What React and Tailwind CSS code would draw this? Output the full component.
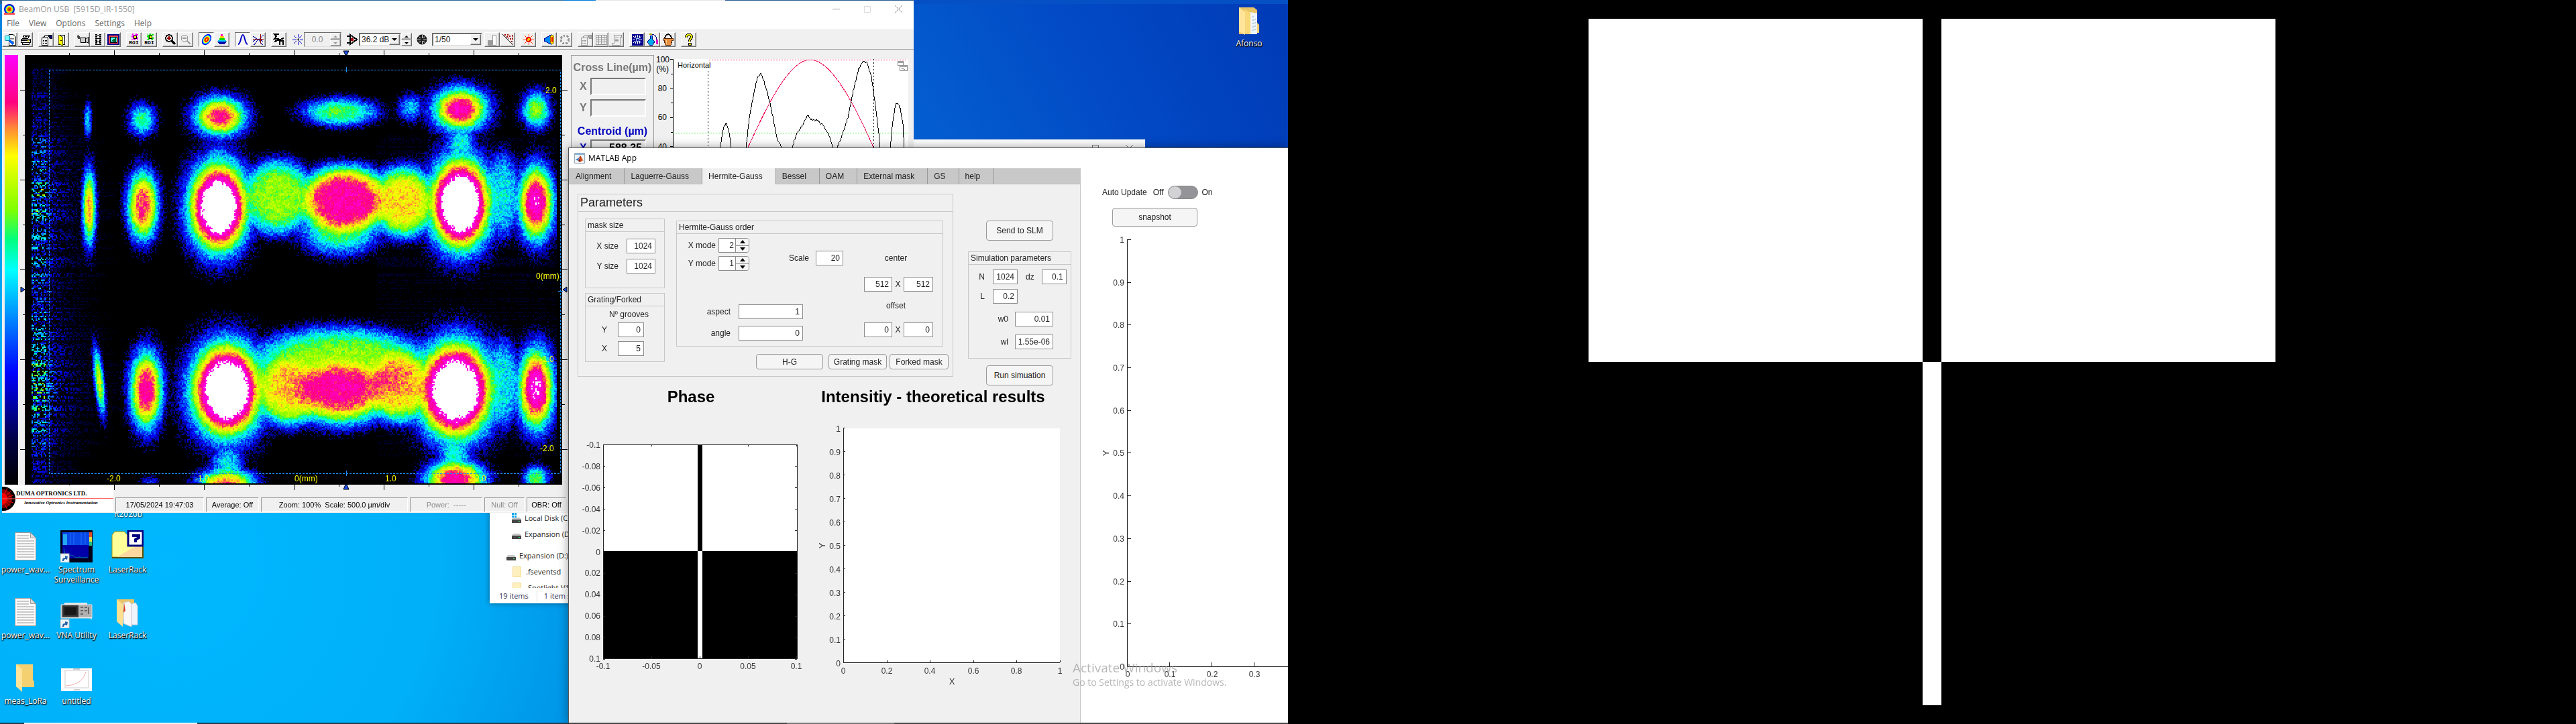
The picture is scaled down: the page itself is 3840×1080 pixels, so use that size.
import { useEffect, useRef } from "react";

/* ---------- beam image ---------- */

const PALETTE = [
  [0, 0, 0, 0],
  [0.1, 0, 0, 60],
  [0.26, 0, 0, 255],
  [0.38, 0, 128, 255],
  [0.5, 0, 255, 255],
  [0.57, 0, 255, 128],
  [0.64, 128, 255, 0],
  [0.765, 255, 255, 0],
  [0.83, 255, 136, 56],
  [0.89, 255, 0, 128],
  [1, 255, 0, 220],
];

/* centre x, centre y, half width, half height, amplitude, tilt, edge steepness */
const SPOTS = [
  [130, 178, 8, 36, 0.46, 0, 1.25],
  [211, 178, 28, 34, 0.56, 0, 1.25],
  [327, 173, 54, 42, 0.92, 0, 1.2],
  [505, 166, 74, 28, 0.6, 0, 1.5],
  [610, 160, 26, 28, 0.44, 0, 1.25],
  [684, 162, 58, 46, 0.97, 0, 1.2],
  [797, 163, 30, 39, 0.66, 0, 1.25],
  [685, 212, 32, 34, 0.5, 0, 1.25],
  [132, 308, 14, 80, 0.84, 0, 1.2],
  [212, 306, 32, 72, 0.88, 0, 1.4],
  [325, 308, 62, 94, 1.24, 0, 1.3],
  [325, 232, 24, 28, 0.4, 0, 1.25],
  [512, 298, 86, 64, 0.94, 0, 2.2],
  [505, 340, 80, 52, 0.6, 0, 1.5],
  [412, 293, 66, 68, 0.66, 0, 2.5],
  [600, 300, 62, 66, 0.78, 0, 2.2],
  [684, 303, 64, 96, 1.3, 0, 1.25],
  [797, 302, 38, 80, 1.0, 0, 1.25],
  [747, 290, 34, 80, 0.48, 0, 2],
  [147, 567, 10, 70, 0.72, 0.1, 1.25],
  [217, 580, 34, 82, 0.94, 0, 1.3],
  [337, 580, 74, 98, 1.3, 0, 1.25],
  [505, 580, 100, 66, 0.9, 0, 1.8],
  [505, 548, 170, 74, 0.66, 0, 2.6],
  [430, 580, 66, 66, 0.77, 0, 2.2],
  [592, 572, 66, 70, 0.8, 0, 2.2],
  [677, 580, 78, 102, 1.3, 0, 1.25],
  [797, 578, 38, 86, 1.03, 0, 1.25],
  [747, 570, 34, 84, 0.48, 0, 2],
  [338, 690, 34, 40, 0.48, 0, 1.25],
  [337, 722, 58, 34, 0.86, 0, 1.4],
  [675, 676, 34, 36, 0.52, 0, 1.25],
  [677, 714, 60, 40, 0.94, 0, 1.4],
  [797, 712, 26, 26, 0.62, 0, 1.25],
  [222, 722, 20, 18, 0.32, 0, 1.25],
];

function makeRandom(seed) {
  let s = seed;
  return () => {
    s = (s + 0x6d2b79f5) | 0;
    let t = Math.imul(s ^ (s >>> 15), 1 | s);
    t = (t + Math.imul(t ^ (t >>> 7), 61 | t)) ^ t;
    return ((t ^ (t >>> 14)) >>> 0) / 4294967296;
  };
}

function colourOf(v) {
  if (v >= 1.04) return [255, 255, 255];
  if (v <= 0) return [0, 0, 0];
  for (let i = 1; i < PALETTE.length; i++) {
    if (v <= PALETTE[i][0]) {
      const a = PALETTE[i - 1];
      const b = PALETTE[i];
      const t = (v - a[0]) / (b[0] - a[0]);
      return [1, 2, 3].map((k) => a[k] + (b[k] - a[k]) * t);
    }
  }
  return [255, 0, 230];
}

function BeamCanvas() {
  const ref = useRef(null);
  useEffect(() => {
    const canvas = ref.current;
    const ctx = canvas.getContext("2d");
    const { width, height } = canvas;
    const img = ctx.createImageData(width, height);
    const rand = makeRandom(41);
    const coarse = Array.from({ length: 170 * 170 }, () => rand() - 0.5);
    for (let j = 0; j < height; j++) {
      const y = 82 + j * 2;
      const rowNoise = rand();
      for (let i = 0; i < width; i++) {
        const x = 37 + i * 2;
        let sum = 0;
        for (const [cx, cy, w, h, amp, tilt, steep] of SPOTS) {
          const dx = (x - cx - tilt * (y - cy)) / w;
          const dy = (y - cy) / h;
          const r2 = dx * dx + dy * dy;
          if (r2 < 4) sum += Math.pow(amp * Math.exp(-1.9 * Math.pow(r2, steep)), 5);
        }
        let v = Math.pow(sum, 0.2);
        const band =
          Math.exp(-Math.pow((y - 310) / 110, 2)) + Math.exp(-Math.pow((y - 570) / 100, 2)) + 0.3;
        const edge = x < 68 ? 1.7 : 1.2 * Math.exp(-(x - 68) / 36);
        const right = x > 560 ? 0.3 : 0.1;
        const floor = band * (edge * 0.16 + right * 0.16) * (0.4 + rowNoise);
        const n = rand();
        const c = coarse[Math.floor(j / 2.5) * 170 + Math.floor(i / 2.5)];
        v = v + (n - 0.5) * (v < 0.5 ? 0.17 : 0.08) + c * 0.07 * (v > 0.1 ? 1 : 0);
        if (v < 0.12) v = n > 0.5 ? floor * (n + 0.6) : 0;
        if (v < 0.05) v = 0;
        if (x < 47 || x > 827 || y < 102 || y > 719) v = 0;
        const [r, g, b] = colourOf(v);
        const k = (j * width + i) * 4;
        img.data[k] = r;
        img.data[k + 1] = g;
        img.data[k + 2] = b;
        img.data[k + 3] = 255;
      }
    }
    ctx.putImageData(img, 0, 0);
  }, []);
  return (
    <canvas
      ref={ref}
      width={400}
      height={320}
      className="col-start-1 row-start-1 mt-2 ml-[10px] h-[641px] w-[801px] bg-black [image-rendering:pixelated]"
    />
  );
}

const MAJOR_X = [170, 304, 438, 572, 706];
const MINOR_X = [103, 237, 371, 505, 639, 773];
const MAJOR_Y = [134, 268, 402, 536, 670];
const MINOR_Y = [201, 335, 469, 603];

function BeamView() {
  return (
    <div className="grid h-[650px] w-[821px] shrink-0">
      <BeamCanvas />
      <svg
        viewBox="27 74 821 658"
        className="col-start-1 row-start-1 h-[658px] w-[821px] overflow-visible"
        fontFamily="'Liberation Sans', sans-serif"
        fontSize="12"
        fill="#ffff00"
      >
        <g stroke="#000" shapeRendering="crispEdges">
          {MAJOR_X.map((x) => (
            <path key={x} d={`M${x} 75v7M${x} 723v8`} />
          ))}
          {MINOR_X.map((x) => (
            <path key={x} d={`M${x} 79v3M${x} 723v3`} />
          ))}
          {MAJOR_Y.map((y) => (
            <path key={y} d={`M30 ${y}h7M838 ${y}h8`} />
          ))}
          {MINOR_Y.map((y) => (
            <path key={y} d={`M34 ${y}h3M838 ${y}h4`} />
          ))}
        </g>
        <g fill="#2050e8" stroke="#000">
          <path d="M512 76h8l-3 6h-2zM512 730h8l-3-7h-2zM31 428v8l6-4zM845 428v8l-6-4z" />
        </g>
        <rect x="73" y="104" width="762" height="602" fill="none" stroke="#1e90ff" strokeDasharray="3 2" shapeRendering="crispEdges" />
        <path d="M516 100v8M516 702v8M70 434h7M832 434h7" stroke="#1e90ff" shapeRendering="crispEdges" />
        <g>
          <text x="813" y="139">2.0</text>
          <text x="799" y="416">0(mm)</text>
          <text x="805" y="540">-1.0</text>
          <text x="805" y="673">-2.0</text>
          <text x="159" y="718">-2.0</text>
          <text x="291" y="718">-1.0</text>
          <text x="439" y="718">0(mm)</text>
          <text x="574" y="718">1.0</text>
          <text x="708" y="718">2.0</text>
        </g>
      </svg>
    </div>
  );
}

/* ---------- toolbar ---------- */

const Glyph = ({ children, w = 18 }) => (
  <svg viewBox={`0 0 ${w} 18`} width={w} height="18" fill="none" stroke="#000" shapeRendering="crispEdges" aria-hidden="true">
    {children}
  </svg>
);

const Properties = ({ c = "#000", p = "#000080" }) => (
  <Glyph>
    <path d="M2 6h9v11H2zM4 10h2M7 10h3M4 12h2M7 12h3M4 14h2M7 14h3" stroke={c} />
    <path d="M5 6l3-4h4l1 2-3 3" stroke={c} />
    <path d="M12 2h5v5h-3z" fill={p} stroke={c} />
  </Glyph>
);

const ICONS = {
  preview: (
    <Glyph>
      <path d="M7 1h6l4 4v12H7z" fill="#fff" />
      <path d="M9 7h6M9 9h6M9 11h6M9 13h6" stroke="#777" />
      <circle cx="5" cy="7" r="4" fill="#7ff" stroke="#08a" />
      <path d="M8 10l6 6" stroke="#06f" strokeWidth="3" />
    </Glyph>
  ),
  print: (
    <Glyph>
      <path d="M5 7l2-5h8l-2 5z" fill="#fff" />
      <path d="M2 8h14v5H2zM4 13h10v3H4z" fill="#fff" />
      <path d="M8 4h4M7 6h4M3 10h12" />
      <path d="M12 11h2" stroke="#cc0" strokeWidth="2" />
    </Glyph>
  ),
  properties: <Properties />,
  exit: (
    <Glyph>
      <path d="M4 2h9v14H4z" fill="#fff" />
      <path d="M4 2l6 3v13l-6-3z" fill="#ff0" stroke="#660" />
      <path d="M7 10h2" />
    </Glyph>
  ),
  camera: (
    <Glyph>
      <path d="M5 6h8v7H6zM13 8l4-2v8l-4-2z" fill="#ccc" />
      <path d="M2 3l3 3M1 5h4M2 7h3" strokeWidth="2" stroke="#444" />
    </Glyph>
  ),
  film: (
    <Glyph>
      <path d="M6 1v16M12 1v16" strokeWidth="3" strokeDasharray="2 1" />
      <path d="M6 2h6M6 7h6M6 12h6M6 16h6" />
    </Glyph>
  ),
  picture: (
    <Glyph>
      <path d="M1 2h16v14H1z" fill="#f44" stroke="#008" strokeWidth="2" />
      <path d="M4 5h10v8H4z" fill="#5ff" />
      <path d="M5 12l5-4 3-3v8z" fill="#063" stroke="none" />
    </Glyph>
  ),
  zoomIn: (
    <Glyph>
      <circle cx="7" cy="7" r="5" fill="#fff" strokeWidth="2" />
      <path d="M4 7h6M7 4v6" stroke="#900" strokeWidth="2" />
      <path d="M11 11l5 5" strokeWidth="3" />
    </Glyph>
  ),
  zoomOut: (
    <Glyph>
      <circle cx="7" cy="7" r="5" stroke="#999" />
      <path d="M4 7h6M11 11l5 5" stroke="#999" strokeWidth="2" />
    </Glyph>
  ),
  beam2d: (
    <Glyph>
      <g transform="rotate(35 9 9)" stroke="none" shapeRendering="auto">
        <ellipse cx="9" cy="9" rx="6" ry="9" fill="#00f" />
        <ellipse cx="9" cy="9" rx="5" ry="7" fill="#0ff" />
        <ellipse cx="9" cy="9" rx="4" ry="6" fill="#ff0" />
        <ellipse cx="9" cy="9" rx="3" ry="4" fill="#f00" />
        <ellipse cx="9" cy="9" rx="1" ry="2" fill="#ff0" />
      </g>
    </Glyph>
  ),
  beam3d: (
    <Glyph>
      <g stroke="none">
        <path d="M7 1h3v3H7z" fill="#f0a" />
        <path d="M6 4h6v3H6z" fill="#fc0" />
        <path d="M5 7h8v3H5z" fill="#0d0" />
        <path d="M3 10h12v3H3z" fill="#0cf" />
        <path d="M1 12h16l-5 4H6z" fill="#00a" />
      </g>
    </Glyph>
  ),
  gauss: (
    <Glyph>
      <path d="M2 16c4 0 4-14 7-14s3 14 7 14" stroke="#0000c0" strokeWidth="2" shapeRendering="auto" />
    </Glyph>
  ),
  cross: (
    <Glyph>
      <path d="M1 4l6 4-6 4M2 17c4-2 6-8 7-9 2 2 3 7 7 9M17 2l-6 6 5 4" stroke="#0000a0" />
      <path d="M1 8h16M12 1v14" stroke="#900" />
    </Glyph>
  ),
  sum: (
    <Glyph>
      <path d="M8 2V1H2l3 3-3 4h6V7M2 12l14-5M10 17v-6h5v6" strokeWidth="2" />
    </Glyph>
  ),
  bars: (
    <Glyph>
      <path d="M2 10h6v7H2z" fill="#999" stroke="#999" />
      <path d="M9 2h5v15H9z" fill="#fff" stroke="#999" />
    </Glyph>
  ),
  scatter: (
    <Glyph>
      <path d="M1 1l16 16" />
      <path d="M4 2h2M8 2h2M7 5h2M11 4h2M12 8h2M9 7h1M15 3h2M15 8h2M14 12h2M15 5h1" stroke="#a00" strokeWidth="2" />
    </Glyph>
  ),
  laser: (
    <Glyph>
      <path d="M9 1v4M9 13v4M1 9h4M13 9h4M3 3l3 3M12 12l3 3M15 3l-3 3M6 12l-3 3" stroke="#f30" />
      <circle cx="9" cy="9" r="3" fill="#fb0" stroke="#e00" strokeWidth="2" />
    </Glyph>
  ),
  horn: (
    <Glyph>
      <path d="M1 8l10-6v14L1 11z" fill="#08f" stroke="#008" />
      <ellipse cx="13" cy="9" rx="3" ry="7" fill="#ff0" stroke="#960" />
      <path d="M13 5v8" stroke="#f00" strokeWidth="2" />
    </Glyph>
  ),
  ring: (
    <Glyph>
      <circle cx="9" cy="9" r="6" stroke="#999" strokeWidth="3" strokeDasharray="3 2" />
    </Glyph>
  ),
  propertiesOff: <Properties c="#999" p="#aaa" />,
  grid: (
    <Glyph>
      <path d="M1 2h16v14H1zM1 5h16M1 9h16M1 12h16M5 2v14M9 2v14M13 2v14" stroke="#999" />
    </Glyph>
  ),
  script: (
    <Glyph>
      <path d="M5 2h11v3h-2v12H2v-3h3zM7 6h5M7 8h5M7 10h5M7 12h5" stroke="#999" />
    </Glyph>
  ),
  pattern: (
    <Glyph>
      <path d="M1 1h16v16H1z" fill="#000090" stroke="#000090" />
      <path d="M3 4l3 3M6 3v3M15 4l-3 3M12 3v3M3 14l3-3M6 15v-3M15 14l-3-3M12 15v-3M2 9h4M12 9h4M9 2v4M9 12v4" stroke="#fff" />
      <path d="M7 7h4v4H7z" stroke="#9cf" />
    </Glyph>
  ),
  flask: (
    <Glyph>
      <path d="M4 1h4" stroke="#aa0" strokeWidth="2" />
      <path d="M5 3v5l-4 4 3 5h5l3-5-4-4V3z" fill="#0ae" stroke="#008" />
      <path d="M8 2c5-1 6 2 7 7" stroke="#008" />
      <path d="M15 9v7" stroke="#d0c" strokeWidth="3" />
    </Glyph>
  ),
  bucket: (
    <Glyph>
      <path d="M4 8c0-9 10-9 10 0" strokeWidth="2" />
      <path d="M2 7h14v3h-1l-2 7H5L3 10H2z" fill="#e89040" stroke="#520" />
      <path d="M6 10l1 6" stroke="#ffd090" />
    </Glyph>
  ),
  help: (
    <Glyph>
      <path d="M5 6V4l2-2h4l2 2v2l-3 4v2" strokeWidth="4" />
      <path d="M5 6V4l2-2h4l2 2v2l-3 4v2" strokeWidth="2" stroke="#ee0" />
      <path d="M8 14h4v3H8z" fill="#ee0" />
    </Glyph>
  ),
};

function Roi({ colour }) {
  return (
    <span className="flex flex-col items-end">
      <svg viewBox="0 0 10 10" className="mr-px size-[10px]" shapeRendering="crispEdges" aria-hidden="true">
        <rect x="1" y="1" width="8" height="8" fill="none" stroke={colour} strokeWidth="2" strokeDasharray="1 1" />
        <rect x="2" y="2" width="6" height="6" fill={colour} />
        <rect x="3" y="3" width="4" height="4" fill="#ff0" stroke="#000" />
      </svg>
      <span className="font-mono text-[8px] leading-[8px] font-bold">ROI</span>
    </span>
  );
}

const RAISED = "border border-t-white border-l-white border-r-[#6d6d6d] border-b-[#6d6d6d] shadow-[inset_-1px_-1px_0_#b0b0b0]";

function Tool({ name, children, pressed }) {
  return (
    <button
      type="button"
      aria-label={name}
      className={
        pressed
          ? "flex h-[22px] w-[23px] items-center justify-center overflow-hidden border border-t-[#6d6d6d] border-r-white border-b-white border-l-[#6d6d6d] bg-[#f8f8f8]"
          : `flex h-[22px] w-[23px] items-center justify-center overflow-hidden bg-[#f0f0f0] ${RAISED}`
      }
    >
      {children || ICONS[name]}
    </button>
  );
}

function ToolGroup({ names, pressed }) {
  return (
    <div className="flex">
      {names.map((n) => (
        <Tool key={n} name={n} pressed={n === pressed} />
      ))}
    </div>
  );
}

function StepButtons({ label, muted }) {
  return (
    <span className={muted ? "flex flex-col text-[#999]" : "flex flex-col text-black"}>
      <button type="button" aria-label={`${label} up`} className={`flex h-[10px] w-4 items-center justify-center bg-[#f0f0f0] ${RAISED}`}>
        <svg width="6" height="3" viewBox="0 0 6 3" fill="currentColor"><path d="M0 3h6L3 0z" /></svg>
      </button>
      <button type="button" aria-label={`${label} down`} className={`flex h-[10px] w-4 items-center justify-center bg-[#f0f0f0] ${RAISED}`}>
        <svg width="6" height="3" viewBox="0 0 6 3" fill="currentColor"><path d="M0 0h6L3 3z" /></svg>
      </button>
    </span>
  );
}

function Combo({ label, value, className }) {
  return (
    <span className={`flex h-5 border-2 border-t-[#6d6d6d] border-r-[#e3e3e3] border-b-[#e3e3e3] border-l-[#6d6d6d] bg-white ${className}`}>
      <select aria-label={label} defaultValue={value} className="min-w-0 flex-1 appearance-none bg-white pl-0.5 text-xs leading-4 text-[#222]">
        <option>{value}</option>
      </select>
      <span className={`flex w-4 shrink-0 items-center justify-center bg-[#f0f0f0] ${RAISED}`}>
        <svg width="8" height="4" viewBox="0 0 8 4"><path d="M0 0h8L4 4z" /></svg>
      </span>
    </span>
  );
}

function Toolbar() {
  return (
    <div className="flex h-[30px] shrink-0 items-center gap-2 border-t border-b border-t-[#e8e8e8] border-b-[#a0a0a0] bg-[#f0f0f0]">
      <ToolGroup names={["preview", "print"]} />
      <ToolGroup names={["properties", "exit"]} />
      <ToolGroup names={["camera", "film", "picture"]} />
      <div className="flex">
        <Tool name="set region"><Roi colour="#f0f" /></Tool>
        <Tool name="show region"><Roi colour="#0d0" /></Tool>
      </div>
      <ToolGroup names={["zoomIn", "zoomOut"]} />
      <ToolGroup names={["beam2d", "beam3d"]} pressed="beam2d" />
      <ToolGroup names={["gauss", "cross"]} pressed="gauss" />
      <ToolGroup names={["sum"]} />
      <div className="flex items-center">
        <Glyph>
          <path d="M9 1v5M9 12v5M1 9h5M12 9h5M3 3l4 4M11 11l4 4M15 3l-4 4M7 11l-4 4" stroke="#00c" />
          <path d="M9 7v4M7 9h4" />
        </Glyph>
        <span className="flex h-[22px] w-14 border border-t-[#6d6d6d] border-r-[#ddd] border-b-[#ddd] border-l-[#6d6d6d]">
          <input aria-label="Average level" defaultValue="0.0" className="w-[38px] bg-[#f0f0f0] text-center text-xs leading-4 text-[#888]" />
          <StepButtons label="Average level" muted />
        </span>
        <span className="ml-[7px]">
          <Glyph>
            <path d="M1 4h5M1 14h5M6 2v14l10-7z" fill="#ddd" strokeWidth="2" />
            <circle cx="9" cy="9" r="2" fill="#a00" stroke="#a00" />
          </Glyph>
        </span>
        <Combo label="Gain" value="36.2 dB" className="ml-px w-[63px]" />
        <StepButtons label="Gain" />
        <span className="mx-1.5">
          <Glyph>
            <circle cx="9" cy="9" r="7" fill="#222" shapeRendering="auto" />
            <path d="M9 2v5M9 11v5M2 9h5M11 9h5M4 4l3 3M11 11l3 3M14 4l-3 3M7 11l-3 3" stroke="#ddd" />
          </Glyph>
        </span>
        <Combo label="Shutter" value="1/50" className="mr-[-5px] w-[75px]" />
      </div>
      <ToolGroup names={["bars", "scatter"]} />
      <ToolGroup names={["laser"]} />
      <ToolGroup names={["horn", "ring"]} />
      <ToolGroup names={["propertiesOff", "grid", "script"]} />
      <ToolGroup names={["pattern", "flask", "bucket"]} />
      <ToolGroup names={["help"]} />
    </div>
  );
}

/* ---------- BeamOn window ---------- */

function Reading({ label, value, className }) {
  return (
    <label className={`flex items-center gap-1 pl-3 text-base leading-6 font-bold ${className}`}>
      <span className="w-3 shrink-0">{label}</span>
      <input
        aria-label={label}
        defaultValue={value}
        className="h-[26px] w-[83px] border-2 border-t-[#777] border-r-white border-b-white border-l-[#777] bg-[#f0f0f0] pr-1 text-right text-base leading-5 text-black"
      />
    </label>
  );
}

function wobble(points) {
  const rand = makeRandom(9);
  let d = `M${points[0][0]} ${points[0][1]}`;
  for (let i = 1; i < points.length; i++) {
    const [x0, y0] = points[i - 1];
    const [x1, y1] = points[i];
    for (let x = x0 + 1; x <= x1; x++) {
      const t = (x - x0) / (x1 - x0);
      d += `L${x} ${Math.round(y0 + (y1 - y0) * t + (rand() - 0.5) * 3)}`;
    }
  }
  return d;
}

const TRACES = [
  [[1073, 222], [1076, 205], [1079, 188], [1083, 184], [1087, 197], [1090, 222]],
  [[1112, 222], [1117, 175], [1124, 138], [1129, 116], [1134, 109], [1137, 116], [1144, 138], [1153, 178], [1158, 206], [1166, 221]],
  [[1181, 221], [1187, 200], [1196, 187], [1204, 171], [1208, 178], [1219, 180], [1228, 188], [1236, 202], [1242, 221]],
  [[1248, 221], [1256, 200], [1264, 175], [1272, 135], [1280, 103], [1287, 91], [1292, 93], [1299, 114], [1304, 150], [1309, 190], [1312, 222]],
  [[1327, 222], [1331, 180], [1335, 156], [1338, 153], [1342, 162], [1346, 185], [1348, 222]],
];

function ProfileChart() {
  return (
    <svg viewBox="975 74 387 148" className="h-[148px] w-[387px]" fontFamily="'Liberation Sans', sans-serif" fontSize="12">
      <rect x="1003" y="88" width="351" height="140" fill="#fff" />
      <g textAnchor="end">
        <text x="998" y="93">100</text>
        <text x="997" y="107">(%)</text>
        <text x="994" y="136">80</text>
        <text x="994" y="179">60</text>
        <text x="994" y="223">40</text>
      </g>
      <path d="M1003 88v140M999 88h4M999 131h4M999 175h4M999 218h4M1000 110h3M1000 153h3M1000 197h3" stroke="#000" fill="none" shapeRendering="crispEdges" />
      <path d="M1057 89h296" stroke="#f03060" strokeDasharray="2 2" shapeRendering="crispEdges" />
      <path d="M1003 198h350" stroke="#40f040" strokeDasharray="2 2" shapeRendering="crispEdges" />
      <path d="M1055 106v120M1302 88v138" stroke="#000" strokeDasharray="2 3" shapeRendering="crispEdges" />
      <text x="1010" y="101" fontSize="11">Horizontal</text>
      <path d="M1114 222C1140 165 1175 89 1208 89S1278 165 1303 222" stroke="#f02060" fill="none" shapeRendering="crispEdges" />
      {TRACES.map((t) => (
        <path key={t[0][0]} d={wobble(t)} stroke="#000" fill="none" shapeRendering="crispEdges" />
      ))}
      <path d="M1338 91h8v6h-8zM1341 97h11v8h-11zM1341 99h11M1338 93h8M1343 101l6 3" stroke="#888" fill="#fff" shapeRendering="crispEdges" />
    </svg>
  );
}

function WindowButtons() {
  return (
    <div className="ml-auto flex items-center gap-9 pr-[17px] text-[#999]">
      <button type="button" aria-label="Minimize"><svg width="11" height="11" viewBox="0 0 11 11" stroke="currentColor"><path d="M0 5.500h11" /></svg></button>
      <button type="button" aria-label="Maximize" className="text-[#ddd]"><svg width="10" height="10" viewBox="0 0 10 10" stroke="currentColor" fill="none"><path d="M.5.5h9v9h-9z" /></svg></button>
      <button type="button" aria-label="Close"><svg width="11" height="11" viewBox="0 0 11 11" stroke="currentColor"><path d="M0 0l11 11M11 0L0 11" /></svg></button>
    </div>
  );
}

const STATUS = [
  ["17/05/2024 19:47:03", "w-[132px]"],
  ["Average: Off", "w-[79px]"],
  ["Zoom: 100%  Scale: 500.0 µm/div", "w-[219px]"],
  ["Power:  -----", "w-[108px] text-[#8a8a8a]"],
  ["Null: Off", "w-[60px] text-[#8a8a8a]"],
  ["OBR: Off", "w-[59px]"],
];

function BeamOnWindow() {
  return (
    <section className="absolute top-px left-[3px] flex h-[764px] w-[1359px] flex-col overflow-hidden bg-[#f0f0f0] font-['Liberation_Sans',sans-serif] text-xs">
      <header className="flex h-[25px] shrink-0 items-center gap-1.5 bg-white pl-[3px] font-['Open_Sans',sans-serif] text-[#999]">
        <svg width="16" height="16" viewBox="0 0 16 16" aria-hidden="true">
          <ellipse cx="8" cy="8" rx="8" ry="8" fill="#00c" />
          <ellipse cx="8" cy="8" rx="6" ry="6" fill="#0dd" />
          <ellipse cx="8" cy="8" rx="5" ry="5" fill="#ee0" />
          <ellipse cx="8" cy="8" rx="3" ry="3" fill="#f30" />
          <ellipse cx="8" cy="8" rx="1" ry="1" fill="#0a0" />
          <path d="M0 13h16v3H0z" fill="#f55" />
        </svg>
        <h1 className="whitespace-pre">BeamOn USB  [5915D_IR-1550]</h1>
        <WindowButtons />
      </header>
      <nav className="flex h-[18px] shrink-0 items-center gap-3.5 bg-white pl-[7px] font-['Open_Sans',sans-serif] text-[#666]">
        {["File", "View", "Options", "Settings", "Help"].map((m) => (
          <button key={m} type="button">{m}</button>
        ))}
      </nav>
      <Toolbar />
      <div className="flex h-[650px] shrink-0">
        <div className="mt-2 ml-1 h-[641px] w-5 shrink-0 bg-[linear-gradient(to_bottom,#ff00ff_0%,#ff0080_11%,#ff8838_17%,#ffff00_23.5%,#80ff00_36%,#00ff80_43%,#00ffff_50%,#0080ff_62%,#0000ff_74%,#000040_90%,#000000_100%)]" />
        <BeamView />
        <aside className="mt-2 ml-[3px] w-[124px] shrink-0 border border-b-0 border-[#999]">
          <h2 className="mt-2 text-center text-base leading-5 font-bold text-[#777]">Cross Line(µm)</h2>
          <Reading label="X" value="" className="mt-[5px] text-[#777]" />
          <Reading label="Y" value="" className="mt-1.5 text-[#777]" />
          <h2 className="mt-3 text-center text-base leading-5 font-bold text-[#0000c0]">Centroid (µm)</h2>
          <Reading label="X" value="588.35" className="mt-0.5 text-[#0000c0]" />
        </aside>
        <ProfileChart />
      </div>
      <footer className="flex h-10 shrink-0 items-end">
        <div className="flex h-10 w-[166px] shrink-0 overflow-hidden bg-white font-['Liberation_Serif',serif]">
          <svg width="21" height="40" viewBox="0 0 21 40" className="shrink-0" aria-hidden="true">
            <ellipse cx="2" cy="20" rx="18" ry="18" fill="#000" />
            <ellipse cx="1" cy="20" rx="14" ry="14" fill="#800" />
            <ellipse cx="0" cy="20" rx="8" ry="9" fill="#f00" />
            <path d="M0 20L14 8M0 20l17-5M0 20l17 6M0 20l13 11M0 20L8 4M0 20l8 16" stroke="#f00" />
            <path d="M0 20h21" stroke="#f66" />
          </svg>
          <div className="flex-1 whitespace-nowrap">
            <p className="h-5 border-b border-[#f66] pt-1.5 text-[9px] leading-3 font-bold">DUMA OPTRONICS LTD.</p>
            <p className="pl-3 text-[7px] leading-3 font-bold italic">Innovative Optronics Instrumentation</p>
          </div>
        </div>
        <div className="ml-[3px] flex gap-[3px] text-[11px]">
          {STATUS.map(([t, c]) => (
            <span key={t} className={`h-[22px] border border-t-[#999] border-r-white border-b-white border-l-[#999] text-center leading-5 whitespace-pre ${c}`}>
              {t}
            </span>
          ))}
          <span className="h-[22px] w-40 border border-t-[#999] border-l-[#999]" />
        </div>
      </footer>
    </section>
  );
}

/* ---------- MATLAB window ---------- */

const FIELD = "h-[22px] border border-[#8c8c8c] bg-white pr-1 text-right text-xs text-[#222]";

function Field({ label, value, width, labelClass = "", className = "" }) {
  return (
    <label className={`flex items-center ${className}`}>
      <span className={labelClass}>{label}</span>
      <input defaultValue={value} className={`${FIELD} ${width}`} />
    </label>
  );
}

function Spinner({ label, value }) {
  return (
    <label className="flex items-center gap-1">
      <span className="w-[42px] text-right whitespace-nowrap">{label}</span>
      <span className="flex h-[22px] w-[46px] overflow-hidden rounded-r border border-[#8c8c8c]">
        <input defaultValue={value} className="w-6 bg-white pr-0.5 text-right" />
        <span className="flex flex-1 flex-col divide-y divide-[#8c8c8c] border-l border-[#8c8c8c] bg-[#f5f5f5]">
          <button type="button" aria-label={`${label} up`} className="flex flex-1 items-center justify-center">
            <svg width="8" height="5" viewBox="0 0 8 5"><path d="M0 5h8L4 0z" /></svg>
          </button>
          <button type="button" aria-label={`${label} down`} className="flex flex-1 items-center justify-center">
            <svg width="8" height="5" viewBox="0 0 8 5"><path d="M0 0h8L4 5z" /></svg>
          </button>
        </span>
      </span>
    </label>
  );
}

function Panel({ title, className = "", children }) {
  return (
    <section className={`border border-[#c8c8c8] ${className}`}>
      <h3 className="h-[19px] border-b border-[#c8c8c8] pl-[3px] leading-[18px] whitespace-nowrap">{title}</h3>
      {children}
    </section>
  );
}

const Push = ({ className, children }) => (
  <button type="button" className={`rounded border border-[#999] bg-[#f5f5f5] whitespace-nowrap ${className}`}>
    {children}
  </button>
);

const Pair = ({ name, value, className }) => (
  <div className={`flex items-center justify-between ${className}`}>
    <input aria-label={`${name} x`} defaultValue={value} className={`${FIELD} w-[42px]`} />
    <span>X</span>
    <input aria-label={`${name} y`} defaultValue={value} className={`${FIELD} w-11`} />
  </div>
);

function Parameters() {
  return (
    <section className="mt-[14px] ml-[13px] w-[560px] shrink-0 self-start border border-[#c8c8c8] pb-[10px]">
      <h2 className="h-[26px] border-b border-[#c8c8c8] pl-[3px] text-lg leading-6">Parameters</h2>
      <div className="flex justify-between pr-[6px] pl-[10px]">
        <div className="mt-[10px] flex w-[119px] flex-col gap-[7px]">
          <Panel title="mask size" className="h-[104px]">
            <div className="mt-[10px] flex flex-col gap-2">
              <Field label="X size" value="1024" width="w-[43px]" labelClass="mr-3 w-[49px] text-right" />
              <Field label="Y size" value="1024" width="w-[43px]" labelClass="mr-3 w-[49px] text-right" />
            </div>
          </Panel>
          <Panel title="Grating/Forked" className="h-[103px]">
            <p className="pl-3 text-center leading-6">Nº grooves</p>
            <div className="flex flex-col gap-1.5">
              <Field label="Y" value="0" width="w-[39px]" labelClass="mr-4 w-8 text-right" />
              <Field label="X" value="5" width="w-[39px]" labelClass="mr-4 w-8 text-right" />
            </div>
          </Panel>
        </div>
        <div className="mt-[13px] flex w-[406px] flex-col gap-[11px]">
          <Panel title="Hermite-Gauss order" className="h-[188px] w-[398px]">
            <div className="flex">
              <div className="w-[248px] shrink-0">
                <div className="mt-[6px] flex items-start justify-between pl-4">
                  <div className="flex flex-col gap-[5px]">
                    <Spinner label="X mode" value="2" />
                    <Spinner label="Y mode" value="1" />
                  </div>
                  <Field label="Scale" value="20" width="w-[41px]" labelClass="mr-[10px]" className="mt-[19px]" />
                </div>
                <div className="mt-[50px] flex flex-col gap-[10px]">
                  <Field label="aspect" value="1" width="w-24" labelClass="mr-3 w-20 text-right" />
                  <Field label="angle" value="0" width="w-24" labelClass="mr-3 w-20 text-right" />
                </div>
              </div>
              <div className="ml-[31px] flex w-[103px] flex-col pt-[28px] text-center">
                <span className="pr-5 pl-3 leading-4">center</span>
                <Pair name="center" value="512" className="mt-5" />
                <span className="mt-[13px] pr-5 pl-3 leading-4">offset</span>
                <Pair name="offset" value="0" className="mt-[17px]" />
              </div>
            </div>
          </Panel>
          <div className="flex justify-end">
            <Push className="h-[23px] w-[100px]">H-G</Push>
            <Push className="ml-2 h-[23px] w-[87px]">Grating mask</Push>
            <Push className="ml-1 h-[23px] w-[88px]">Forked mask</Push>
          </div>
        </div>
      </div>
    </section>
  );
}

function Simulation() {
  return (
    <div className="mt-[54px] ml-[22px] flex w-[154px] flex-col items-center gap-[15px]">
      <Push className="mb-px h-[30px] w-[100px]">Send to SLM</Push>
      <Panel title="Simulation parameters" className="h-[160px] w-full">
        <div className="mt-[7px] flex">
          <Field label="N" value="1024" width="w-[37px]" labelClass="mr-3 w-6 text-right" />
          <Field label="dz" value="0.1" width="w-[37px]" labelClass="mr-[11px] ml-3" />
        </div>
        <Field label="L" value="0.2" width="w-[37px]" labelClass="mr-3 w-6 text-right" className="mt-[7px]" />
        <Field label="w0" value="0.01" width="w-[57px]" labelClass="mr-[10px] w-[59px] text-right" className="mt-3" />
        <Field label="wl" value="1.55e-06" width="w-[57px]" labelClass="mr-[10px] w-[59px] text-right" className="mt-3" />
      </Panel>
      <Push className="-mt-[5px] h-[30px] w-[100px]">Run simuation</Push>
    </div>
  );
}

const PHASE_Y = ["-0.1", "-0.08", "-0.06", "-0.04", "-0.02", "0", "0.02", "0.04", "0.06", "0.08", "0.1"];
const PHASE_X = ["-0.1", "-0.05", "0", "0.05", "0.1"];
const UNIT = ["0", "0.1", "0.2", "0.3", "0.4", "0.5", "0.6", "0.7", "0.8", "0.9", "1"];
const UNIT_X = ["0", "0.2", "0.4", "0.6", "0.8", "1"];

function PhasePlot() {
  return (
    <svg viewBox="862 607 348 471" className="h-[471px] w-[348px]" fontSize="12" fill="#333">
      <rect x="900" y="663" width="289" height="159" fill="#fff" />
      <rect x="900" y="822" width="289" height="160" fill="#000" />
      <rect x="1041" y="663" width="7" height="159" fill="#000" />
      <rect x="1041" y="822" width="7" height="160" fill="#fff" />
      <rect x="900" y="663" width="289" height="319" fill="none" stroke="#222" shapeRendering="crispEdges" />
      {PHASE_Y.map((t, i) => (
        <g key={t}>
          <path d={`M900 ${663 + i * 32}h3M1186 ${663 + i * 32}h3`} stroke="#222" shapeRendering="crispEdges" />
          <text x="896" y={668 + Math.round(i * 31.9)} textAnchor="end">{t}</text>
        </g>
      ))}
      {PHASE_X.map((t, i) => (
        <g key={t}>
          <path d={`M${900 + i * 72} 982v-3M${900 + i * 72} 663v3`} stroke="#222" shapeRendering="crispEdges" />
          <text x={900 + i * 72} y="998" textAnchor="middle">{t}</text>
        </g>
      ))}
    </svg>
  );
}

function IntensityPlot() {
  return (
    <svg viewBox="1210 607 390 471" className="h-[471px] w-[390px]" fontSize="12" fill="#333">
      <rect x="1258" y="639" width="323" height="349" fill="#fff" />
      <path d="M1258 639v349h323" stroke="#222" fill="none" shapeRendering="crispEdges" />
      {UNIT.map((t, i) => (
        <g key={t}>
          <path d={`M1258 ${988 - i * 35}h3`} stroke="#222" shapeRendering="crispEdges" />
          <text x="1254" y={994 - i * 35} textAnchor="end">{t}</text>
        </g>
      ))}
      {UNIT_X.map((t, i) => (
        <g key={t}>
          <path d={`M${1258 + Math.round(i * 64.5)} 988v-3`} stroke="#222" shapeRendering="crispEdges" />
          <text x={1258 + Math.round(i * 64.5)} y="1005" textAnchor="middle">{t}</text>
        </g>
      ))}
      <text x="1420" y="1021" textAnchor="middle" fontSize="13">X</text>
      <text transform="translate(1231 814) rotate(-90)" textAnchor="middle" fontSize="13">Y</text>
    </svg>
  );
}

function CameraPlot() {
  return (
    <svg viewBox="1611 345 309 733" className="h-[733px] w-[309px]" fontSize="12" fill="#333">
      <path d="M1680 357v637h240" stroke="#222" fill="none" shapeRendering="crispEdges" />
      {UNIT.map((t, i) => (
        <g key={t}>
          <path d={`M1680 ${994 - Math.round(i * 63.7)}h6`} stroke="#222" shapeRendering="crispEdges" />
          <text x="1676" y={999 - Math.round(i * 63.7)} textAnchor="end">{t}</text>
        </g>
      ))}
      {UNIT.slice(0, 4).map((t, i) => (
        <g key={t}>
          <path d={`M${1680 + i * 63} 994v-6`} stroke="#222" shapeRendering="crispEdges" />
          <text x={1681 + i * 63} y="1010" textAnchor="middle">{t}</text>
        </g>
      ))}
      <text transform="translate(1653 676) rotate(-90)" textAnchor="middle" fontSize="13">Y</text>
    </svg>
  );
}

const TABS = ["Alignment", "Laguerre-Gauss", "Hermite-Gauss", "Bessel", "OAM", "External mask", "GS", "help"];

function MatlabWindow() {
  return (
    <section className="absolute top-[220px] right-0 bottom-0 left-[847px] flex flex-col overflow-hidden border-t border-l border-[#555] bg-white font-['Liberation_Sans',sans-serif] text-xs text-[#222] shadow-[0_0_14px_rgba(0,0,0,0.4)]">
      <header className="flex h-[30px] shrink-0 items-center gap-[5px] pl-2 font-['Open_Sans',sans-serif] text-black">
        <svg width="16" height="16" viewBox="0 0 16 16" aria-hidden="true">
          <path d="M.5.5h15v15H.5z" fill="#eef2f6" stroke="#9ab" />
          <path d="M1 1h14v2H1z" fill="#8ab8dc" />
          <path d="M2 10l4-2 3-4-3 8z" fill="#3a7cc0" />
          <path d="M6 12l3-8c2 2 3 6 5 8-2-1-3 0-5 2z" fill="#d8501c" />
          <path d="M9 4c1 3 0 6-3 8l3 2z" fill="#701c10" />
        </svg>
        MATLAB App
      </header>
      <div className="flex min-h-0 flex-1">
        <div className="w-[763px] shrink-0 border-r border-[#c8c8c8] bg-[#f0f0f0]">
          <div role="tablist" className="flex h-6 border-b border-[#bbb] bg-[#c8c8c8] pl-px">
            {TABS.map((t) => (
              <button
                key={t}
                type="button"
                role="tab"
                aria-selected={t === "Hermite-Gauss"}
                className={
                  t === "Hermite-Gauss"
                    ? "-mb-px border-r border-[#999] bg-[#f0f0f0] pr-[19px] pl-[9px]"
                    : "border-r border-[#999] pr-[19px] pl-[9px]"
                }
              >
                {t}
              </button>
            ))}
          </div>
          <div className="flex h-[302px]">
            <Parameters />
            <Simulation />
          </div>
          <div className="flex pl-[13px]">
            <div>
              <h2 className="pr-[10px] text-center text-2xl leading-[30px] font-bold text-black">Phase</h2>
              <PhasePlot />
            </div>
            <div>
              <h2 className="pr-[26px] text-center text-2xl leading-[30px] font-bold whitespace-nowrap text-black">Intensitiy - theoretical results</h2>
              <IntensityPlot />
            </div>
          </div>
        </div>
        <div className="flex-1 bg-white">
          <label className="mt-[26px] ml-8 flex items-center">
            <span className="mr-[9px]">Auto Update</span>
            <span className="mr-1.5">Off</span>
            <input
              type="checkbox"
              role="switch"
              className="h-5 w-[45px] appearance-none rounded-full border border-[#888] bg-[#939398] before:block before:h-[18px] before:w-[19px] before:rounded-full before:bg-[#d2d2d4] before:content-['']"
            />
            <span className="ml-1.5">On</span>
          </label>
          <Push className="mt-[13px] ml-[47px] block h-7 w-[127px]">snapshot</Push>
          <div className="mt-[7px]">
            <CameraPlot />
          </div>
        </div>
      </div>
    </section>
  );
}

/* ---------- explorer window ---------- */

const Drive = ({ windows }) => (
  <svg width="16" height="16" viewBox="0 0 16 16" aria-hidden="true">
    {windows && <path d="M1 0h3v3H1zM5 0h3v3H5zM1 4h3v3H1zM5 4h3v3H5z" fill="#10a8f0" />}
    <path d="M3 7h10l2 3H1z" fill="#c8c8c8" />
    <path d="M1 10h14v5H1z" fill="#444" />
    <path d="M11 12h2v1h-2z" fill="#3f6" />
  </svg>
);

const SmallFolder = () => (
  <svg width="14" height="16" viewBox="0 0 14 16" aria-hidden="true">
    <path d="M.5.5h12v15H.5z" fill="#fff0c0" stroke="#f0d890" />
    <path d="M11 10h2v5h-2z" fill="#ffe8a0" />
  </svg>
);

function ExplorerWindow() {
  return (
    <section className="absolute top-[700px] left-[730px] flex h-[200px] w-[240px] flex-col bg-white pt-[61px] font-['Open_Sans',sans-serif] text-[11px] whitespace-nowrap text-[#222] shadow-[0_0_8px_rgba(0,0,0,0.4)]">
      <div className="h-[116px] overflow-hidden">
        <p className="flex h-6 items-center gap-1 pl-8"><Drive windows />Local Disk (C:)</p>
        <p className="flex h-6 items-center gap-1 pl-8"><Drive />Expansion (D:)</p>
        <p className="mt-2 flex h-6 items-center gap-1 pl-6"><Drive />Expansion (D:)</p>
        <p className="flex h-6 items-center gap-1.5 pl-[34px]"><SmallFolder />.fseventsd</p>
        <p className="flex h-6 items-center gap-1.5 pl-[34px]"><SmallFolder />.Spotlight-V100</p>
      </div>
      <p className="mt-1 flex items-center pl-[14px] text-[#335]">
        <span className="border-r border-[#ddd] pr-3">19 items</span>
        <span className="pl-2.5">1 item selected</span>
      </p>
    </section>
  );
}

/* ---------- desktop icons ---------- */

const Shortcut = () => (
  <g>
    <rect x="0" y="35" width="13" height="13" fill="#f0f4f8" stroke="#bbb" />
    <path d="M3 46c0-4 1-5 4-5v-3l4 1-1 5-2-1c-2 0-3 1-3 3z" fill="#2860a8" />
  </g>
);

const TextFile = () => (
  <svg width="32" height="48" viewBox="0 0 32 48" aria-hidden="true">
    <path d="M.5 3.500h23l8 8v33H.5z" fill="#fafafa" stroke="#999" />
    <path d="M23.500 3.500v8h8z" fill="#ddd" stroke="#999" />
    <path d="M3 8h18M3 12h18M3 16h26M3 20h26M3 24h26M3 28h26M3 32h26M3 36h26M3 40h26" stroke="#999" />
  </svg>
);

const Spectrum = () => (
  <svg width="48" height="48" viewBox="0 0 48 48" aria-hidden="true">
    <rect width="48" height="48" fill="#000018" />
    <rect x="3" y="3" width="40" height="20" fill="#0848e8" />
    <rect x="4" y="6" width="6" height="16" fill="#20a8f0" />
    <path d="M15 3v20M20 3v20M31 3v20M37 3v18" stroke="#2070f8" />
    <rect x="3" y="22" width="39" height="20" fill="#0000a8" />
    <path d="M5 26l2 10 5 3 5-2 6 4 6-1 5 1 7-1" stroke="#00709a" fill="none" />
    <rect x="43" y="3" width="4" height="7" fill="#e05020" />
    <rect x="43" y="10" width="4" height="7" fill="#e0e040" />
    <rect x="43" y="17" width="4" height="6" fill="#20c080" />
    <Shortcut />
  </svg>
);

const SevenFolder = () => (
  <svg width="48" height="48" viewBox="0 0 48 48" aria-hidden="true">
    <path d="M1 7l4-5h14l5 5h22v33H1z" fill="#ffff99" stroke="#a09000" />
    <path d="M8 40l38-22v22z" fill="#ffd8a0" />
    <path d="M1 41h46V8" stroke="#605000" strokeWidth="2" fill="none" />
    <rect x="25" y="1" width="22" height="22" fill="#fff" stroke="#000080" strokeWidth="3" />
    <path d="M31 8h10v3l-5 3v4" stroke="#000080" strokeWidth="4" fill="none" />
  </svg>
);

const Analyzer = () => (
  <svg width="48" height="48" viewBox="0 0 48 48" aria-hidden="true">
    <path d="M6 10h34v4H6z" fill="#e8e8e8" />
    <path d="M1 13h46v20H1z" fill="#b0b0b0" stroke="#ddd" />
    <path d="M3 14h24v17H3z" fill="#333" />
    <path d="M6 17h18v11H6z" fill="#181818" />
    <path d="M30 17h4M36 17h4M30 22h4M36 22h4M30 27h4M42 17v10" stroke="#666" strokeWidth="2" />
    <path d="M28 32h18v3" stroke="#fff" fill="none" />
    <Shortcut />
  </svg>
);

const FilledFolder = () => (
  <svg width="32" height="48" viewBox="0 0 32 48" aria-hidden="true">
    <path d="M0 5h26v30H0z" fill="#e8c468" />
    <path d="M10 10l8-2 4 4v34l-12-5z" fill="#f8f8f8" stroke="#ccc" />
    <path d="M22 12l6-2 3 5v28h-9z" fill="#eef4fa" stroke="#ccd" />
    <path d="M11 10l2 12-3 3z" fill="#d84020" />
    <path d="M0 5l9 7v34l-9-8z" fill="#ffe090" />
  </svg>
);

const EmptyFolder = () => (
  <svg width="32" height="48" viewBox="0 0 32 48" aria-hidden="true">
    <path d="M2 4h25v23l2 3v8H2z" fill="#f5d070" />
    <path d="M2 4l9 7v34l-9-8z" fill="#ffe49a" />
  </svg>
);

const Plot = () => (
  <svg width="46" height="48" viewBox="0 0 46 48" aria-hidden="true">
    <rect y="10" width="46" height="34" fill="#fff" />
    <rect x="6" y="13" width="35" height="26" fill="none" stroke="#ccc" />
    <path d="M7 36c14-1 26-6 30-21" stroke="#f0a8a8" fill="none" />
    <path d="M18 11h10M19 42h9" stroke="#999" />
  </svg>
);

const AfonsoFolder = () => (
  <svg width="32" height="44" viewBox="0 0 32 44" aria-hidden="true">
    <path d="M1 1h22l5 4v36H1z" fill="#e8c468" />
    <path d="M18 8l10 2v31H18z" fill="#eef4fa" />
    <path d="M22 14v24M25 18v18" stroke="#7ab" strokeDasharray="2 3" />
    <path d="M28 24l3 3v12h-3z" fill="#f5d070" />
    <path d="M9 4l9 5v32l-9-2z" fill="#f8d878" />
    <path d="M1 1l9 7v34L1 37z" fill="#ffe49a" />
  </svg>
);

function DesktopIcon({ icon, label }) {
  return (
    <a
      href="#"
      className="flex h-[98px] w-[76px] flex-col items-center gap-[3px] text-center font-['Open_Sans',sans-serif] text-xs leading-[15px] text-white [text-shadow:1px_1px_1px_#000,0_1px_2px_#000]"
    >
      {icon}
      <span>{label}</span>
    </a>
  );
}

function DesktopIcons() {
  return (
    <div className="absolute top-[791px] left-0 grid grid-cols-[76px_76px_76px]">
      <DesktopIcon icon={<TextFile />} label="power_wav..." />
      <DesktopIcon icon={<Spectrum />} label="Spectrum Surveillance" />
      <DesktopIcon icon={<SevenFolder />} label="LaserRack" />
      <DesktopIcon icon={<TextFile />} label="power_wav..." />
      <DesktopIcon icon={<Analyzer />} label="VNA Utility" />
      <DesktopIcon icon={<FilledFolder />} label="LaserRack" />
      <DesktopIcon icon={<EmptyFolder />} label="meas_LoRa" />
      <DesktopIcon icon={<Plot />} label="untitled" />
    </div>
  );
}

function Desktop() {
  return (
    <main className="relative min-h-screen overflow-hidden bg-[radial-gradient(circle_at_250px_840px,#00b8ff_0,#00b0f8_400px,#0094e6_650px,#0468d6_1150px,#0248c4_1600px,#0038b4_1900px)]">
      <div className="absolute inset-x-0 top-0 flex h-1.5 bg-[#2c6898]">
        <span className="ml-[840px] w-12 bg-[#0078d7]" />
        <span className="w-[193px] bg-[#e5e5e5]" />
        <span className="w-[281px] bg-[#2b5c94]" />
        <span className="flex-1 bg-[#0450c4]" />
      </div>
      <span className="absolute top-[759px] left-[170px] font-['Open_Sans',sans-serif] text-xs text-white [text-shadow:1px_1px_2px_#000]">R2020b</span>
      <DesktopIcons />
      <div className="absolute top-[10px] right-[20px]">
        <DesktopIcon icon={<AfonsoFolder />} label="Afonso" />
      </div>
      <section className="absolute top-[208px] left-[1300px] flex h-5 w-[407px] justify-end gap-10 bg-white pt-2 pr-[18px] text-[#777]">
        <svg width="10" height="10" viewBox="0 0 10 10" fill="none" stroke="currentColor" aria-hidden="true"><path d="M.5.5h9v9h-9z" /></svg>
        <svg width="11" height="11" viewBox="0 0 11 11" stroke="currentColor" aria-hidden="true"><path d="M0 0l11 11M11 0L0 11" /></svg>
      </section>
      <ExplorerWindow />
      <BeamOnWindow />
      <MatlabWindow />
      <div className="absolute top-[983px] left-[1599px] font-['Open_Sans',sans-serif] whitespace-nowrap text-[#999]/70">
        <p className="text-[19px] leading-[26px]">Activate Windows</p>
        <p className="text-sm leading-[18px]">Go to Settings to activate Windows.</p>
      </div>
      <div className="absolute inset-x-0 bottom-0 flex h-0.5 bg-[#1f3c50]">
        <span className="ml-9 w-[258px] bg-[#f0f0f0]" />
        <span className="ml-[554px] w-[325px] bg-[#484848]" />
        <span className="w-40 bg-[#777]" />
        <span className="flex-1 bg-[#484848]" />
      </div>
    </main>
  );
}

/* ---------- modulator display ---------- */

function ModulatorDisplay() {
  return (
    <aside className="flex min-h-screen items-center justify-center bg-black">
      <div className="grid h-[1024px] w-[1024px] grid-cols-[1fr_28px_1fr] grid-rows-2">
        <div className="bg-white" />
        <div />
        <div className="bg-white" />
        <div className="col-start-2 bg-white" />
      </div>
    </aside>
  );
}

export default function App() {
  return (
    <div className="grid grid-cols-2">
      <Desktop />
      <ModulatorDisplay />
    </div>
  );
}
